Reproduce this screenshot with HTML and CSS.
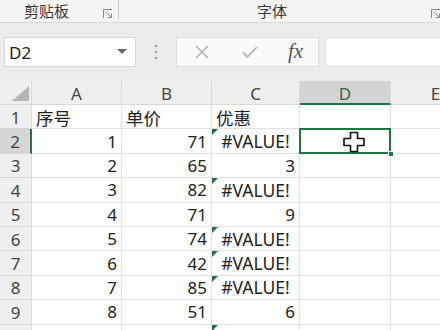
FILE: index.html
```html
<!DOCTYPE html>
<html lang="zh-CN">
<head>
<meta charset="utf-8">
<title>Sheet</title>
<link rel="stylesheet" href="styles.css">
</head>
<body>
<div class="app">
  <div class="ribbon">
    <div class="group g-clip">
      <span class="glabel">剪贴板</span>
      <svg class="launcher" width="10" height="10" viewBox="0 0 10 10"><path d="M0.5 9V0.5H9" fill="none" stroke="#8a8a8a" stroke-width="1"/><path d="M3 3L8.5 8.5M8.5 4.5V8.5H4.5" fill="none" stroke="#8a8a8a" stroke-width="1"/></svg>
    </div>
    <div class="group g-font">
      <span class="glabel">字体</span>
      <svg class="launcher" width="10" height="10" viewBox="0 0 10 10"><path d="M0.5 9V0.5H9" fill="none" stroke="#8a8a8a" stroke-width="1"/><path d="M3 3L8.5 8.5M8.5 4.5V8.5H4.5" fill="none" stroke="#8a8a8a" stroke-width="1"/></svg>
    </div>
  </div>
  <div class="fbar">
    <div class="namebox">
      <span class="nbtext">D2</span>
      <svg class="nbarrow" width="10" height="6" viewBox="0 0 10 6"><path d="M0 0H10L5 5Z" fill="#6a6a6a"/></svg>
    </div>
    <svg class="dots" width="4" height="16" viewBox="0 0 4 16"><circle cx="2" cy="2" r="1.3" fill="#a8a8a8"/><circle cx="2" cy="8" r="1.3" fill="#a8a8a8"/><circle cx="2" cy="14" r="1.3" fill="#a8a8a8"/></svg>
    <div class="fbtns">
      <svg class="fbtn" width="14" height="14" viewBox="0 0 14 14"><path d="M1 1L13 13M13 1L1 13" stroke="#b4b4b4" stroke-width="1.6" fill="none"/></svg>
      <svg class="fbtn" width="16" height="12" viewBox="0 0 16 12"><path d="M1 6.5L5.5 11L15 1" stroke="#b4b4b4" stroke-width="1.8" fill="none"/></svg>
      <span class="fx">fx</span>
    </div>
    <div class="finput"></div>
  </div>
  <div class="sheet">
    <div class="hd corner"><span class="tri"></span></div>
    <div class="hd col">A</div>
    <div class="hd col">B</div>
    <div class="hd col">C</div>
    <div class="hd col colsel">D</div>
    <div class="hd col">E</div>

    <div class="hd row">1</div>
    <div class="c txt">序号</div>
    <div class="c txt">单价</div>
    <div class="c txt">优惠</div>
    <div class="c"></div>
    <div class="c"></div>

    <div class="hd row rowsel">2</div>
    <div class="c num">1</div>
    <div class="c num">71</div>
    <div class="c err flag">#VALUE!</div>
    <div class="c sel">
      <svg class="cursor" width="24" height="22" viewBox="0 0 24 22"><path d="M8.5 1.5H15.5V7.5H22V14.5H15.5V20.5H8.5V14.5H2V7.5H8.5Z" fill="#fff" stroke="#111" stroke-width="1.6" stroke-linejoin="round"/></svg>
      <span class="handle"></span>
    </div>
    <div class="c"></div>

    <div class="hd row">3</div>
    <div class="c num">2</div>
    <div class="c num">65</div>
    <div class="c num">3</div>
    <div class="c"></div>
    <div class="c"></div>

    <div class="hd row">4</div>
    <div class="c num">3</div>
    <div class="c num">82</div>
    <div class="c err flag">#VALUE!</div>
    <div class="c"></div>
    <div class="c"></div>

    <div class="hd row">5</div>
    <div class="c num">4</div>
    <div class="c num">71</div>
    <div class="c num">9</div>
    <div class="c"></div>
    <div class="c"></div>

    <div class="hd row">6</div>
    <div class="c num">5</div>
    <div class="c num">74</div>
    <div class="c err flag">#VALUE!</div>
    <div class="c"></div>
    <div class="c"></div>

    <div class="hd row">7</div>
    <div class="c num">6</div>
    <div class="c num">42</div>
    <div class="c err flag">#VALUE!</div>
    <div class="c"></div>
    <div class="c"></div>

    <div class="hd row">8</div>
    <div class="c num">7</div>
    <div class="c num">85</div>
    <div class="c err flag">#VALUE!</div>
    <div class="c"></div>
    <div class="c"></div>

    <div class="hd row">9</div>
    <div class="c num">8</div>
    <div class="c num">51</div>
    <div class="c num">6</div>
    <div class="c"></div>
    <div class="c"></div>

    <div class="hd row"></div>
    <div class="c num"></div>
    <div class="c num"></div>
    <div class="c flag"></div>
    <div class="c"></div>
    <div class="c"></div>
  </div>
</div>
</body>
</html>
```
FILE: styles.css
```css
* { box-sizing: border-box; }
html, body { margin: 0; padding: 0; }
body {
  width: 440px;
  height: 330px;
  overflow: hidden;
  background: #ffffff;
  font-family: "Noto Sans", "Noto Sans CJK SC", sans-serif;
  color: #222;
}
.app {
  display: flex;
  flex-direction: column;
  width: 440px;
  height: 330px;
  overflow: hidden;
}

/* ribbon */
.ribbon {
  display: flex;
  height: 23px;
  background: #f4f4f4;
  border-bottom: 1px solid #d9d9d9;
  flex-shrink: 0;
}
.group {
  display: flex;
  align-items: center;
  height: 19px;
}
.g-clip {
  width: 119px;
  padding-left: 24px;
  padding-right: 5px;
  border-right: 1px solid #c9c9c9;
}
.g-font {
  flex: 1;
  padding-left: 138px;
  padding-right: 0;
}
.glabel {
  font-family: "Noto Sans CJK SC", sans-serif;
  font-size: 15px;
  color: #3a3a3a;
  line-height: 19px;
  padding-top: 2px;
}
.launcher { margin-left: auto; margin-top: 8px; }
.g-font .launcher { width: 10px; position: relative; left: 1px; }

/* formula bar */
.fbar {
  display: flex;
  align-items: center;
  height: 58px;
  background: #ececec;
  padding: 0 0 0 4px;
  flex-shrink: 0;
}
.namebox {
  width: 132px;
  height: 30px;
  background: #fff;
  border: 1px solid #d6d6d6;
  display: flex;
  align-items: center;
  padding: 0 8px 0 4px;
}
.nbtext { font-size: 17px; color: #222; }
.nbarrow { margin-left: auto; }
.dots { margin-left: 18px; margin-right: 18px; }
.fbtns {
  width: 143px;
  height: 30px;
  background: #fafafa;
  border: 1px solid #e0e0e0;
  display: flex;
  align-items: center;
  padding-left: 18px;
}
.fbtn:nth-child(2) { margin-left: 33px; }
.fx {
  margin-left: 30px;
  font-family: "Liberation Serif", serif;
  font-style: italic;
  font-size: 21px;
  color: #555;
  line-height: 1;
  padding-bottom: 2px;
}
.finput {
  flex: 1;
  height: 30px;
  margin-left: 6px;
  background: #fff;
  border: 1px solid #e0e0e0;
  border-right: none;
}

/* sheet */
.sheet {
  display: grid;
  grid-template-columns: 32px 90px 90px 88px 91px 90px;
  grid-template-rows: 24px repeat(10, 24.4px);
  width: 481px;
  flex-shrink: 0;
}
.hd {
  background: #efefef;
  color: #444;
  font-size: 17px;
  display: flex;
  align-items: center;
  justify-content: center;
  border-right: 1px solid #d9d9d9;
  border-bottom: 1px solid #d9d9d9;
  line-height: 1;
}
.col { padding-top: 2px; }
.corner { position: relative; }
.tri {
  position: absolute;
  right: 2px;
  bottom: 3px;
  width: 0;
  height: 0;
  border-left: 17px solid transparent;
  border-bottom: 15px solid #b5b5b5;
}
.colsel {
  background: #d3d3d3;
  color: #2d6a47;
  border-bottom: 2px solid #217346;
}
.row { padding-top: 1px; }
.rowsel {
  background: #d6d6d6;
  border-right: 2px solid #217346;
}
.c {
  position: relative;
  background: #fff;
  border-right: 1px solid #e1e1e1;
  border-bottom: 1px solid #e1e1e1;
  font-size: 17px;
  display: flex;
  align-items: center;
  white-space: nowrap;
  color: #222;
}
.num { justify-content: flex-end; padding-right: 4px; }
.txt { font-size: 17.5px; padding-left: 4px; padding-top: 1px; }
.err { justify-content: center; font-size: 17.5px; }
.flag::before {
  content: "";
  position: absolute;
  left: 0;
  top: 0;
  width: 0;
  height: 0;
  border-top: 6px solid #1f7244;
  border-right: 6px solid transparent;
}
.sel { overflow: visible; }
.sel::after {
  content: "";
  position: absolute;
  left: -1px;
  top: -1px;
  right: -1px;
  bottom: -1px;
  border: 2px solid #217346;
  pointer-events: none;
}
.cursor {
  position: absolute;
  left: 42px;
  top: 2px;
  z-index: 2;
}
.handle {
  position: absolute;
  right: -4px;
  bottom: -4px;
  width: 6px;
  height: 6px;
  background: #217346;
  border: 1px solid #fff;
  z-index: 3;
}
```
